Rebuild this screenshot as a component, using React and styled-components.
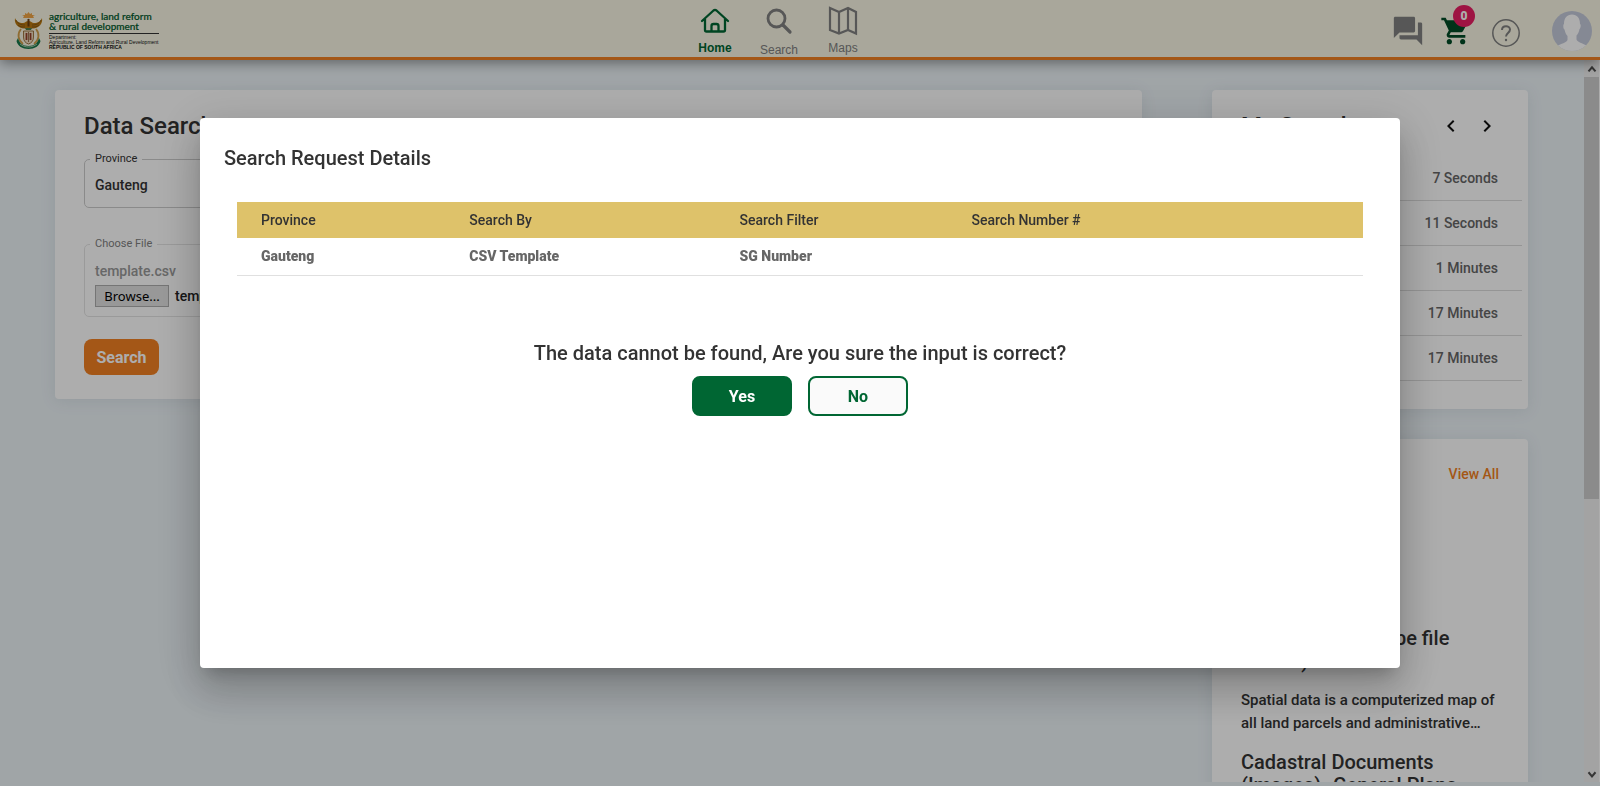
import React from 'react';
import styled, { createGlobalStyle } from 'styled-components';

const Global = createGlobalStyle`
  *, *::before, *::after { box-sizing: border-box; }
  body {
    margin: 0;
    background: #ecf3f7;
    color: #333;
    font: 500 14px/20px Roboto, "Liberation Sans", sans-serif;
    -webkit-font-smoothing: antialiased;
  }
  button, input, select { font: inherit; color: inherit; }
  h1, h2, h3, p { margin: 0; font-weight: 500; }
`;

const Shell = styled.div`
  height: 100vh;
  display: flex;
  flex-direction: column;
  overflow: hidden;
  padding-bottom: 4px;
`;

const Header = styled.header`
  position: relative;
  flex: none;
  height: 60px;
  padding: 0 8px 0 14px;
  display: grid;
  grid-template-columns: 1fr auto 1fr 48px;
  background: #f9f7e5;
  border-bottom: 3px solid #f28123;
  box-shadow: 0 3px 12px rgba(0, 0, 0, 0.4);
`;

const Brand = styled.a`
  display: flex;
  align-items: flex-start;
  gap: 6px;
  padding-top: 11px;
  color: #111;
  text-decoration: none;
`;

const BrandText = styled.span`
  display: flex;
  flex-direction: column;
`;

const BrandName = styled.span`
  font: 500 10px/10px Lato, sans-serif;
  color: #00592b;
  -webkit-text-stroke: 0.2px #00592b;
  padding-bottom: 2px;
  border-bottom: 1px solid #333;
  margin-bottom: 1px;
`;

const BrandSmall = styled.span`
  font: ${(p) => (p.$bold ? 700 : 400)} 5px/5px "Liberation Sans", sans-serif;
  white-space: nowrap;
`;

const Nav = styled.nav`
  display: flex;
  padding-top: 5px;
`;

const NavItem = styled.a`
  width: 64px;
  display: flex;
  flex-direction: column;
  align-items: center;
  gap: 8px;
  font: ${(p) => (p.$active ? 700 : 400)} 12px/14px "Liberation Sans", sans-serif;
  color: ${(p) => (p.$active ? '#006633' : '#808080')};
  text-decoration: none;
`;

const Tools = styled.div`
  display: flex;
  justify-content: flex-end;
  align-items: flex-start;
  padding-top: 14px;
  padding-right: 24px;
`;

const ToolButton = styled.button`
  position: relative;
  display: flex;
  border: 0;
  padding: 0;
  margin-left: ${(p) => p.$gap || 0}px;
  margin-top: ${(p) => p.$drop || 0}px;
  background: none;
  color: ${(p) => p.$tone};
`;

const ProfileButton = styled.button`
  justify-self: end;
  align-self: start;
  display: flex;
  margin-top: 11px;
  border: 0;
  padding: 0;
  background: none;
`;

const Badge = styled.span`
  position: absolute;
  top: -10px;
  right: -3px;
  width: 22px;
  height: 22px;
  border-radius: 50%;
  background: #e91e63;
  color: #fff;
  font: 900 12px/22px Roboto, sans-serif;
  text-align: center;
`;

const Viewport = styled.div`
  flex: 1;
  min-height: 0;
  display: flex;
`;

const Main = styled.main`
  flex: 1;
  min-width: 0;
  overflow: hidden;
  display: flex;
  align-items: flex-start;
  gap: 70px;
  padding: 30px 56px 0 55px;
`;

const Scrollbar = styled.div`
  flex: none;
  width: 16px;
  display: flex;
  flex-direction: column;
  align-items: center;
  background: #f0f0f0;
  border-right: 1px solid #fff;
`;

const ScrollArrow = styled.span`
  height: 17px;
  display: flex;
  align-items: center;
  color: #505050;
`;

const ScrollThumb = styled.span`
  align-self: stretch;
  height: 58.5%;
  background: #cdcdcd;
  margin-bottom: auto;
`;

const Card = styled.section`
  background: #fff;
  border-radius: 4px;
  box-shadow: 0 2px 16px rgba(60, 80, 100, 0.1);
`;

const SearchCard = styled(Card)`
  flex: 1;
  padding: 20px 29px 24px;
`;

const Side = styled.aside`
  flex: none;
  width: 316px;
  display: flex;
  flex-direction: column;
  gap: 30px;
`;

const Heading = styled.h1`
  font-size: 24px;
  line-height: 32px;
`;

const Field = styled.fieldset`
  min-width: 0;
  max-width: 520px;
  margin: ${(p) => (p.$muted ? 30 : 11)}px 0 0;
  border: 1px solid ${(p) => (p.$muted ? '#e4e4e4' : '#ccc')};
  border-radius: 5px;
  padding: 0 10px;
  color: ${(p) => (p.$muted ? '#999' : '#333')};
`;

const Legend = styled.legend`
  margin-left: -5px;
  padding: 0 5px;
  font-size: 11px;
  font-weight: 400;
  line-height: 12px;
  color: ${(p) => (p.$muted ? '#808080' : '#333')};
`;

const ProvinceSelect = styled.select`
  display: block;
  width: 100%;
  height: 42px;
  border: 0;
  padding: 0 0 2px;
  background: transparent;
  appearance: none;
`;

const FileName = styled.p`
  padding-top: 11px;
`;

const FileRow = styled.div`
  display: flex;
  align-items: center;
  gap: 6px;
  padding: 4px 0 9px;
  color: #222;
`;

const BrowseButton = styled.button`
  width: 74px;
  height: 22px;
  padding: 0;
  border: 1px solid #adadad;
  background: #e1e1e1;
  color: #000;
  font: 400 13px/18px "Noto Sans", sans-serif;
`;

const SearchButton = styled.button`
  margin-top: 22px;
  width: 75px;
  height: 36px;
  border: 0;
  border-radius: 8px;
  padding: 1px 0 0;
  background: #f28123;
  color: #fff;
  font-size: 16px;
  font-weight: 700;
`;

const HistoryCard = styled(Card)`
  padding: 20px 6px 28px 29px;
`;

const CardHead = styled.div`
  display: flex;
  align-items: center;
  justify-content: space-between;
  padding-right: ${(p) => p.$inset || 0}px;
`;

const Pager = styled.div`
  display: flex;
  gap: 12px;
`;

const PagerButton = styled.button`
  display: flex;
  border: 0;
  padding: 0;
  background: none;
  color: #111;
`;

const History = styled.ul`
  list-style: none;
  margin: 14px 0 0;
  padding: 0;
`;

const HistoryRow = styled.li`
  height: 45px;
  display: flex;
  align-items: center;
  justify-content: flex-end;
  padding-right: 24px;
  border-bottom: 1px solid #dcdcdc;
  color: #666;
`;

const NewsCard = styled(Card)`
  padding: 19px 29px 24px;
`;

const ViewAll = styled.a`
  color: #f28123;
  text-decoration: none;
`;

const Articles = styled.div`
  display: flex;
  flex-direction: column;
  gap: 16px;
  padding-top: 137px;
`;

const ArticleTitle = styled.h3`
  font-size: 20px;
  line-height: 23px;
  margin-bottom: 16px;
`;

const ArticleText = styled.p`
  font-size: 15px;
  line-height: 23px;
  display: -webkit-box;
  -webkit-box-orient: vertical;
  -webkit-line-clamp: 2;
  overflow: hidden;
`;

const Backdrop = styled.div`
  position: fixed;
  inset: 0;
  display: flex;
  align-items: center;
  justify-content: center;
  background: rgba(0, 0, 0, 0.32);
`;

const Dialog = styled.div`
  width: 75%;
  min-height: 70vh;
  padding: 24px;
  border-radius: 4px;
  background: #fff;
  box-shadow: 0 11px 15px -7px rgba(0, 0, 0, 0.2), 0 24px 38px 3px rgba(0, 0, 0, 0.14),
    0 9px 46px 8px rgba(0, 0, 0, 0.12);
`;

const DialogTitle = styled.h2`
  font-size: 20px;
  line-height: 32px;
`;

const DialogBody = styled.div`
  padding: 28px 13px 0;
`;

const Table = styled.table`
  width: 100%;
  table-layout: fixed;
  border-collapse: collapse;
  text-align: left;

  th { padding: 0 0 0 24px; height: 36px; background: #dec26a; font-weight: 500; }
  th:nth-child(1) { width: 18.5%; }
  th:nth-child(2) { width: 24%; }
  th:nth-child(3) { width: 20.6%; }
  td { padding: 0 0 2px 24px; height: 38px; color: #666; font-weight: 900; border-bottom: 1px solid #e0e0e0; }
`;

const Question = styled.p`
  margin-top: 65px;
  font-size: 20px;
  line-height: 24px;
  text-align: center;
`;

const Actions = styled.div`
  display: flex;
  justify-content: center;
  gap: 16px;
  margin-top: 11px;
`;

const ActionButton = styled.button`
  width: 100px;
  height: 40px;
  padding: 1px 0 0;
  border: 2px solid #006633;
  border-radius: 8px;
  background: ${(p) => (p.$filled ? '#006633' : '#fafafa')};
  color: ${(p) => (p.$filled ? '#fff' : '#006633')};
  font-size: 16px;
  font-weight: 700;
`;

const CoatOfArms = () => (
  <svg width="29" height="39" viewBox="0 0 29 39" aria-hidden="true">
    <path d="M9 7l1-2-2-1 3 0 0-2 2 1 1.500-2 1.500 2 2-1 0 2 3 0-2 1 1 2z" fill="#f0a445" />
    <path d="M1 7c1 3 4 5 8 5 2 0 3-2 5.500-2S18 12 20 12c4 0 7-2 8-5 1 6-3 10-9 10.500h-9C4 17 0 13 1 7z" fill="#b9770f" />
    <path d="M2 9c2 4 5 5 9 5M27 9c-2 4-5 5-9 5M4 14c2 2 4 2 7 2M25 14c-2 2-4 2-7 2" stroke="#77501a" strokeWidth=".8" fill="none" />
    <path d="M13.500 8.500q1-1.500 2 0v7h-2z" fill="#6b3d10" />
    <path d="M11 17h7l-1 2h-5z" fill="#4f7d4a" />
    <path d="M7 18c-4 5-3 11 2 15M22 18c4 5 3 11-2 15" stroke="#d3a04a" strokeWidth="1.800" fill="none" />
    <path d="M9.500 20h10v6c0 4-2 6-5 7-3-1-5-3-5-7z" fill="#efdcc0" stroke="#8b5a1e" strokeWidth=".8" />
    <path d="M12.500 22v7M16.500 22v7" stroke="#94402a" strokeWidth="1.800" />
    <path d="M14.500 21v10" stroke="#7a4b22" strokeWidth=".7" />
    <path d="M4 27c1 5 5 8 10.500 8S24 32 25 27l1.500 3c-1 5-6 8-12 8s-11-3-12-8z" fill="#17784a" />
    <path d="M6 33c5 4 12 4 17 0" stroke="#e3e6c8" strokeWidth=".7" fill="none" />
  </svg>
);

const HomeIcon = () => (
  <svg width="30" height="28" viewBox="0 0 30 28" fill="none" stroke="currentColor" strokeWidth="2.300" strokeLinecap="round" strokeLinejoin="round" aria-hidden="true">
    <path d="M2 16L13.500 5.500q1.500-1.200 3 0L28 16M5 14v11q0 1.500 1.500 1.500h17q1.500 0 1.500-1.500V14M11.500 26v-5q0-2 2-2h3q2 0 2 2v5" />
  </svg>
);

const SearchIcon = () => (
  <svg width="28" height="30" viewBox="0 0 28 30" fill="none" stroke="currentColor" aria-hidden="true">
    <circle cx="11.500" cy="13.500" r="8.500" strokeWidth="2.800" />
    <path d="M18 20l7 7" strokeWidth="3.200" strokeLinecap="round" />
  </svg>
);

const MapIcon = () => (
  <svg width="28" height="28" viewBox="0 0 28 28" fill="none" stroke="currentColor" strokeWidth="2.200" overflow="visible" aria-hidden="true">
    <path d="M1 3l9 4 9-4 8 4v21.500l-8-3.500-9 3.500-9-3.500zM10 7v21M19 3v22" />
  </svg>
);

const ForumIcon = () => (
  <svg width="34" height="34" viewBox="0 0 24 24" fill="currentColor" aria-hidden="true">
    <path d="M21 6h-2v9H6v2c0 .55.45 1 1 1h11l4 4V7c0-.55-.45-1-1-1zm-4 6V3c0-.55-.45-1-1-1H3c-.55 0-1 .45-1 1v14l4-4h10c.55 0 1-.45 1-1z" />
  </svg>
);

const CartIcon = () => (
  <svg width="32" height="32" viewBox="0 0 24 24" fill="currentColor" aria-hidden="true">
    <path d="M7 18c-1.100 0-1.990.9-1.990 2S5.900 22 7 22s2-.9 2-2-.9-2-2-2zM1 2v2h2l3.600 7.590-1.350 2.450c-.16.280-.25.610-.25.960 0 1.100.9 2 2 2h12v-2H7.420c-.14 0-.25-.11-.25-.25l.03-.12.9-1.630h7.450c.75 0 1.410-.41 1.750-1.030l3.580-6.490A1 1 0 0020 4H5.210l-.94-2H1zm16 16c-1.100 0-1.990.9-1.990 2s.89 2 1.990 2 2-.9 2-2-.9-2-2-2z" />
  </svg>
);

const HelpIcon = () => (
  <svg width="28" height="28" viewBox="0 0 28 28" fill="none" stroke="currentColor" aria-hidden="true">
    <circle cx="14" cy="14" r="13.200" strokeWidth="1.500" />
    <path d="M10 11c0-5 8-5 8-.5 0 3.500-4 3.500-4 7" strokeWidth="2" />
    <circle cx="14" cy="21" r="1.200" fill="currentColor" stroke="none" />
  </svg>
);

const Avatar = () => (
  <svg width="40" height="40" viewBox="0 0 40 40" aria-hidden="true">
    <clipPath id="avatar-disc"><circle cx="20" cy="20" r="20" /></clipPath>
    <g clipPath="url(#avatar-disc)">
      <path d="M0 0h40v40H0z" fill="#c5cadb" />
      <path d="M12 13c0-6 3-9.500 8-9.500s8 3.500 8 9.500c1 0 1 4-.5 5-.5 3-1.500 5-3 6.500v4c1 3 6 3.500 10 6V41H5v-6c4-2.500 9.500-3 10.500-6v-4c-1.500-1.500-2.500-4-3-6.500-1.500-1-1.500-5-.5-5.500z" fill="#fff" />
    </g>
  </svg>
);

const PagerIcon = ({ d }) => (
  <svg width="24" height="24" viewBox="0 0 24 24" fill="currentColor" aria-hidden="true">
    <path d={d} />
  </svg>
);

const ScrollIcon = ({ d }) => (
  <svg width="14" height="14" viewBox="0 0 24 24" fill="none" stroke="currentColor" strokeWidth="3.500" aria-hidden="true">
    <path d={d} />
  </svg>
);

const durations = ['7 Seconds', '11 Seconds', '1 Minutes', '17 Minutes', '17 Minutes'];

const articles = [
  {
    title: 'Spatial Data (Shape file format)',
    text: 'Spatial data is a computerized map of all land parcels and administrative boundaries across the country.',
  },
  {
    title: 'Cadastral Documents (Images)- General Plans',
    text: 'Scanned images of approved general plans and diagrams.',
  },
];

export default function App() {
  return (
    <>
      <Global />
      <Shell>
        <Header>
          <Brand href="#">
            <CoatOfArms />
            <BrandText>
              <BrandName>agriculture, land reform<br />&amp; rural development</BrandName>
              <BrandSmall>Department:</BrandSmall>
              <BrandSmall>Agriculture, Land Reform and Rural Development</BrandSmall>
              <BrandSmall $bold>REPUBLIC OF SOUTH AFRICA</BrandSmall>
            </BrandText>
          </Brand>
          <Nav>
            <NavItem href="#home" $active><HomeIcon />Home</NavItem>
            <NavItem href="#search"><SearchIcon />Search</NavItem>
            <NavItem href="#maps"><MapIcon />Maps</NavItem>
          </Nav>
          <Tools>
            <ToolButton $tone="#808080" aria-label="Messages"><ForumIcon /></ToolButton>
            <ToolButton $tone="#004a25" $gap={15} $drop={1} aria-label="Cart"><CartIcon /><Badge>0</Badge></ToolButton>
            <ToolButton $tone="#808080" $gap={20} $drop={5} aria-label="Help"><HelpIcon /></ToolButton>
          </Tools>
          <ProfileButton aria-label="Profile"><Avatar /></ProfileButton>
        </Header>
        <Viewport>
          <Main>
            <SearchCard>
              <Heading>Data Search</Heading>
              <Field>
                <Legend><label htmlFor="province">Province</label></Legend>
                <ProvinceSelect id="province" defaultValue="Gauteng"><option>Gauteng</option></ProvinceSelect>
              </Field>
              <Field $muted>
                <Legend $muted>Choose File</Legend>
                <FileName>template.csv</FileName>
                <FileRow><BrowseButton type="button">Browse...</BrowseButton>template.csv</FileRow>
              </Field>
              <SearchButton type="button">Search</SearchButton>
            </SearchCard>
            <Side>
              <HistoryCard>
                <CardHead $inset={23}>
                  <Heading as="h2">My Search</Heading>
                  <Pager>
                    <PagerButton aria-label="Previous"><PagerIcon d="M15.410 7.410L14 6l-6 6 6 6 1.410-1.410L10.830 12z" /></PagerButton>
                    <PagerButton aria-label="Next"><PagerIcon d="M10 6L8.590 7.410 13.170 12l-4.580 4.590L10 18l6-6z" /></PagerButton>
                  </Pager>
                </CardHead>
                <History>
                  {durations.map((d, i) => <HistoryRow key={i}>{d}</HistoryRow>)}
                </History>
              </HistoryCard>
              <NewsCard>
                <CardHead>
                  <Heading as="h2">News</Heading>
                  <ViewAll href="#news">View All</ViewAll>
                </CardHead>
                <Articles>
                  {articles.map((a) => (
                    <article key={a.title}>
                      <ArticleTitle>{a.title}</ArticleTitle>
                      <ArticleText>{a.text}</ArticleText>
                    </article>
                  ))}
                </Articles>
              </NewsCard>
            </Side>
          </Main>
          <Scrollbar aria-hidden="true">
            <ScrollArrow><ScrollIcon d="M6 16l6-7 6 7" /></ScrollArrow>
            <ScrollThumb />
            <ScrollArrow><ScrollIcon d="M6 9l6 7 6-7" /></ScrollArrow>
          </Scrollbar>
        </Viewport>
      </Shell>
      <Backdrop>
        <Dialog role="dialog" aria-modal="true" aria-labelledby="dialog-title">
          <DialogTitle id="dialog-title">Search Request Details</DialogTitle>
          <DialogBody>
            <Table>
              <thead>
                <tr><th>Province</th><th>Search By</th><th>Search Filter</th><th>Search Number #</th></tr>
              </thead>
              <tbody>
                <tr><td>Gauteng</td><td>CSV Template</td><td>SG Number</td><td /></tr>
              </tbody>
            </Table>
            <Question>The data cannot be found, Are you sure the input is correct?</Question>
            <Actions>
              <ActionButton type="button" $filled>Yes</ActionButton>
              <ActionButton type="button">No</ActionButton>
            </Actions>
          </DialogBody>
        </Dialog>
      </Backdrop>
    </>
  );
}
